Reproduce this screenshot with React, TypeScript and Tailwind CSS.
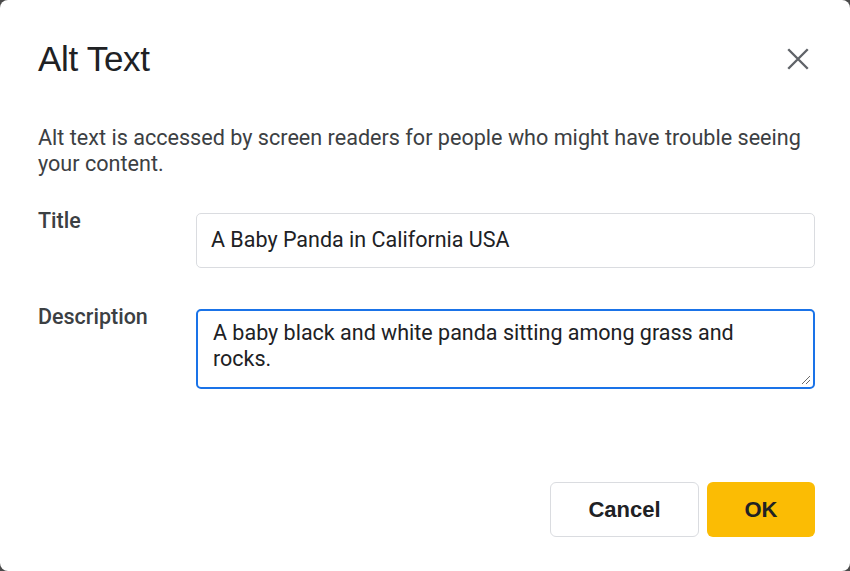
import React from "react";

export default function App() {
  return (
    <div className="w-[850px] h-[571px] bg-[#4a4a4a] overflow-hidden">
      <div
        className="w-full h-full bg-white rounded-[8px] flex flex-col pl-[38px] pr-[35px]"
        style={{ fontFamily: "Roboto, 'Liberation Sans', sans-serif" }}
      >
        <div className="flex items-center justify-between h-[40px] mt-[39px]">
          <h1
            className="text-[35px] leading-[40px] text-[#202124] tracking-[-0.3px]"
            style={{ fontFamily: "'Liberation Sans', Arial, sans-serif" }}
          >
            Alt Text
          </h1>
          <button className="w-[30px] h-[30px] flex items-center justify-center mr-[2px]">
            <svg width="26" height="26" viewBox="0 0 24 24" fill="none" stroke="#5f6368" strokeWidth="2.2" strokeLinecap="butt">
              <path d="M3 3L21 21M21 3L3 21" />
            </svg>
          </button>
        </div>

        <p className="mt-[46px] text-[21.6px] leading-[26px] text-[#3c4043]">
          Alt text is accessed by screen readers for people who might have trouble seeing your content.
        </p>

        <div className="mt-[36px] flex items-start">
          <label className="w-[158px] mt-[-5px] text-[21.5px] leading-[26px] font-medium text-[#3c4043]">Title</label>
          <div className="flex-1 h-[55px] border border-[#dadce0] rounded-[5px] flex items-center pl-[14px] text-[21.5px] text-[#202124]">
            A Baby Panda in California USA
          </div>
        </div>

        <div className="mt-[41px] flex items-start">
          <label className="w-[158px] mt-[-5px] text-[21.5px] leading-[26px] font-medium text-[#3c4043]">Description</label>
          <div className="relative flex-1 h-[80px] border-2 border-[#1a73e8] rounded-[5px] pl-[15px] pt-[9px] pr-[40px] text-[21.5px] leading-[26px] text-[#202124]">
            A baby black and white panda sitting among grass and rocks.
            <svg className="absolute right-[2px] bottom-[2px]" width="10" height="10" viewBox="0 0 10 10" stroke="#6b6b6b" strokeWidth="1">
              <path d="M9 1L1 9M9 5L5 9" />
            </svg>
          </div>
        </div>

        <div
          className="mt-auto mb-[34px] flex justify-end gap-[8px]"
          style={{ fontFamily: "'Liberation Sans', Arial, sans-serif" }}
        >
          <button className="w-[149px] h-[55px] border border-[#dadce0] rounded-[6px] bg-white text-[22px] font-bold text-[#202124]">
            Cancel
          </button>
          <button className="w-[108px] h-[55px] rounded-[6px] bg-[#fbbc04] text-[22px] font-bold text-[#202124]">
            OK
          </button>
        </div>
      </div>
    </div>
  );
}
